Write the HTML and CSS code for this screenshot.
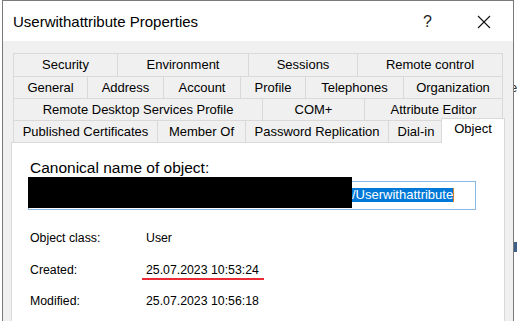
FILE: index.html
```html
<!DOCTYPE html>
<html lang="en">
<head>
<meta charset="utf-8">
<title>Userwithattribute Properties</title>
<link rel="stylesheet" href="styles.css">
</head>
<body>
<div class="window">
  <div class="titlebar">
    <span class="title">Userwithattribute Properties</span>
    <span class="tbtn help">?</span>
    <span class="tbtn close">
      <svg width="14" height="14" viewBox="0 0 14 14"><path d="M1 1 L13 13 M13 1 L1 13" stroke="#111" stroke-width="1.1" fill="none"/></svg>
    </span>
  </div>
  <div class="client">
    <div class="tabs">
      <div class="row row1">
        <div class="tab">Security</div>
        <div class="tab">Environment</div>
        <div class="tab">Sessions</div>
        <div class="tab">Remote control</div>
      </div>
      <div class="row row2">
        <div class="tab">General</div>
        <div class="tab">Address</div>
        <div class="tab">Account</div>
        <div class="tab">Profile</div>
        <div class="tab">Telephones</div>
        <div class="tab">Organization</div>
      </div>
      <div class="row row3">
        <div class="tab">Remote Desktop Services Profile</div>
        <div class="tab">COM+</div>
        <div class="tab">Attribute Editor</div>
      </div>
      <div class="row row4">
        <div class="tab">Published Certificates</div>
        <div class="tab">Member Of</div>
        <div class="tab">Password Replication</div>
        <div class="tab">Dial-in</div>
        <div class="tab active">Object</div>
      </div>
    </div>
    <div class="panel">
      <div class="canon-label">Canonical name of object:</div>
      <div class="field">
        <span class="redact"></span>
        <span class="sel">/Userwithattribute</span><span class="caret"></span>
      </div>
      <div class="props">
        <div class="plabel">Object class:</div>
        <div class="pvalue">User</div>
        <div class="plabel">Created:</div>
        <div class="pvalue"><span class="marked">25.07.2023 10:53:24</span></div>
        <div class="plabel">Modified:</div>
        <div class="pvalue">25.07.2023 10:56:18</div>
      </div>
    </div>
  </div>
</div>
<div class="behind">
  <span class="peek-e">e</span>
  <span class="peek-blue"></span>
</div>
</body>
</html>
```
FILE: styles.css
```css
html, body {
  margin: 0;
  padding: 0;
}
body {
  width: 517px;
  height: 321px;
  overflow: hidden;
  background: #ffffff;
  display: flex;
  font-family: "Liberation Sans", Arial, sans-serif;
  color: #000;
}
.window {
  margin-left: 2px;
  width: 510px;
  height: 330px;
  border: 1px solid #7a7a7a;
  border-bottom: none;
  display: flex;
  flex-direction: column;
  flex-shrink: 0;
}
.titlebar {
  height: 40px;
  background: #fff;
  display: flex;
  align-items: center;
  padding-left: 10px;
  flex-shrink: 0;
}
.title {
  font-size: 15px;
  padding-top: 1px;
  flex: 1;
}
.tbtn {
  height: 40px;
  display: flex;
  align-items: center;
  justify-content: center;
}
.help {
  width: 55px;
  font-size: 16px;
  color: #222;
  padding-top: 1px;
}
.close {
  width: 58px;
  padding-top: 1px;
}
.client {
  flex: 1;
  background: #f0f0f0;
  padding: 12px 8px 0 8px;
  display: flex;
  flex-direction: column;
}
.tabs {
  margin: 0 2px;
  font-size: 13px;
}
.row {
  display: grid;
  height: 22px;
}
.row1 { grid-template-columns: 104px 131px 109px 1fr; height: 23px; }
.row2 { grid-template-columns: 74px 76px 77px 65px 98px 1fr; }
.row3 { grid-template-columns: 249px 102px 1fr; }
.row4 { grid-template-columns: 144px 88px 143px 55px 1fr; }
.tab {
  box-sizing: border-box;
  height: 100%;
  border-top: 1px solid #d9d9d9;
  border-left: 1px solid #d9d9d9;
  line-height: 21px;
  text-align: center;
  white-space: nowrap;
  background: #f0f0f0;
}
.row1 .tab {
  line-height: 22px;
}
.tab:last-child {
  border-right: 1px solid #d9d9d9;
}
.tab.active {
  position: relative;
  z-index: 2;
  background: #fff;
  margin: -2px -2px 0 -2px;
  height: 25px;
  line-height: 19px;
}
.panel {
  flex: 1;
  background: #fff;
  border: 1px solid #d9d9d9;
  padding: 15px 0 0 18px;
  position: relative;
  z-index: 1;
}
.canon-label {
  font-size: 15.5px;
  line-height: 20px;
  height: 23px;
}
.field {
  position: relative;
  margin-left: -2px;
  box-sizing: border-box;
  width: 448px;
  height: 29px;
  border: 1px solid #8ab8ea;
  padding-left: 323px;
  display: flex;
  align-items: center;
}
.redact {
  position: absolute;
  left: -1px;
  top: -5px;
  width: 324px;
  height: 31px;
  background: #000;
}
.sel {
  background: #0078d7;
  color: #fff;
  font-size: 13px;
  line-height: 14px;
  height: 14px;
  margin-top: -1px;
}
.caret {
  width: 1px;
  height: 14px;
  margin-top: -1px;
  background: #d9822b;
}
.props {
  margin-top: 21px;
  display: grid;
  grid-template-columns: 116px 1fr;
  grid-auto-rows: 31.5px;
  font-size: 12.3px;
}
.plabel, .pvalue {
  line-height: 15px;
}
.marked {
  display: inline-block;
  margin-left: -4px;
  padding: 0 5px 0 4px;
  line-height: 15px;
  border-bottom: 2px solid #ea2b36;
}
.behind {
  flex: 1;
  height: 321px;
  overflow: hidden;
  display: flex;
  flex-direction: column;
}
.peek-e {
  margin-top: 80px;
  margin-left: -4px;
  font-size: 13px;
  line-height: 15px;
  color: #333;
}
.peek-blue {
  margin-top: 147px;
  height: 10px;
  background: #3d5f88;
}
```
